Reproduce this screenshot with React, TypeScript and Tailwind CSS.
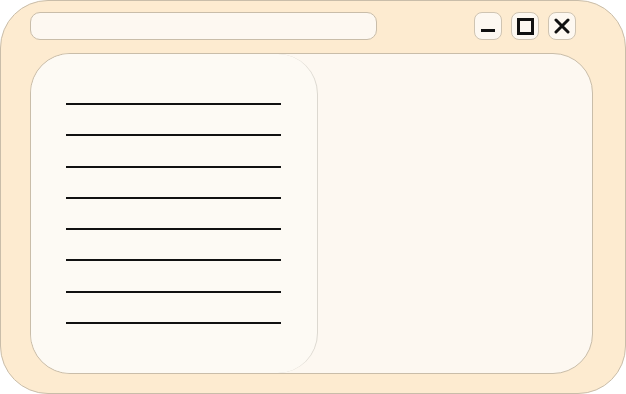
export default function App() {
  const lines = [0, 1, 2, 3, 4, 5, 6, 7];

  return (
    <div className="w-[626px] h-[394px] bg-white">
      <div className="w-[626px] h-[394px] rounded-[48px] border border-[#c9bda9] bg-[#fdebd0] flex flex-col pl-[29px] pr-[32px] pt-[11px]">
        {/* Title bar */}
        <div className="flex items-start h-[28px]">
          <div className="w-[347px] h-[28px] rounded-[10px] border border-[#c9bda9] bg-[#fdf8f1]" />
          <div className="ml-[97px] flex gap-[8px]">
            <button className="w-[28px] h-[28px] rounded-[8px] border border-[#cfc4b2] bg-[#fdf8f1] flex items-center justify-center">
              <span className="block w-[14px] h-[3px] bg-[#111] mt-[9px]" />
            </button>
            <button className="w-[28px] h-[28px] rounded-[8px] border border-[#cfc4b2] bg-[#fdf8f1] flex items-center justify-center ml-[1px]">
              <span className="block w-[17px] h-[17px] border-[3px] border-[#111]" />
            </button>
            <button className="w-[28px] h-[28px] rounded-[8px] border border-[#cfc4b2] bg-[#fdf8f1] flex items-center justify-center ml-[1px]">
              <svg width="16" height="16" viewBox="0 0 16 16">
                <path d="M2 2 L14 14 M14 2 L2 14" stroke="#111" strokeWidth="3" strokeLinecap="round" />
              </svg>
            </button>
          </div>
        </div>

        {/* Content panel */}
        <div className="mt-[13px] w-[563px] h-[321px] rounded-[40px] border border-[#c9bda9] bg-[#fdf8f1] flex">
          <div className="w-[287px] h-full rounded-[40px] border-r border-[#dcd8d0] bg-[#fdfaf4] flex flex-col pl-[35px] pt-[49px] gap-[29.3px]">
            {lines.map((i) => (
              <div key={i} className="w-[215px] h-[2px] bg-[#111]" />
            ))}
          </div>
        </div>
      </div>
    </div>
  );
}
